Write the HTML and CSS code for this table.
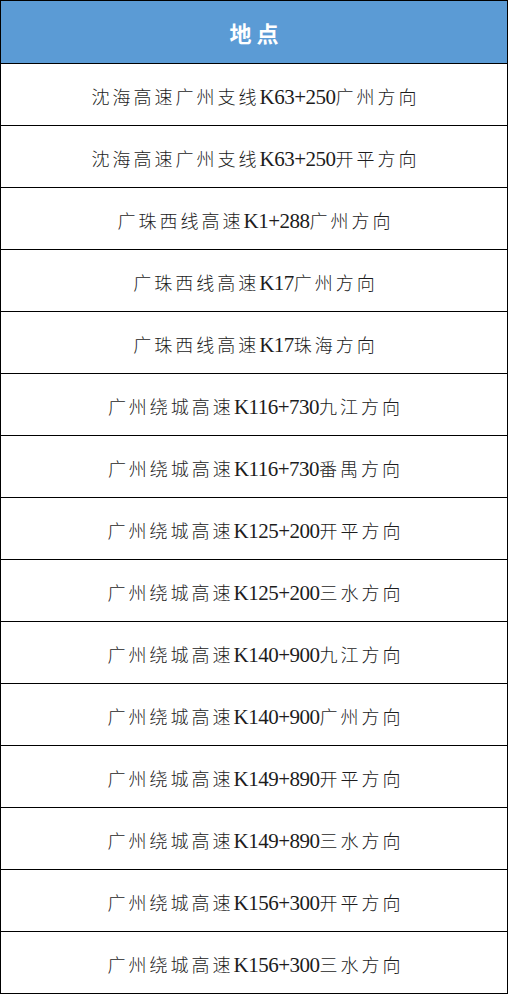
FILE: index.html
```html
<!DOCTYPE html>
<html lang="zh-CN">
<head>
<meta charset="utf-8">
<title>地点</title>
<link rel="stylesheet" href="styles.css">
</head>
<body>
<div class="table">
  <div class="head">地点</div>
  <div class="row">沈海高速广州支线<span class="km">K63+250</span>广州方向</div>
  <div class="row">沈海高速广州支线<span class="km">K63+250</span>开平方向</div>
  <div class="row">广珠西线高速<span class="km">K1+288</span>广州方向</div>
  <div class="row">广珠西线高速<span class="km">K17</span>广州方向</div>
  <div class="row">广珠西线高速<span class="km">K17</span>珠海方向</div>
  <div class="row">广州绕城高速<span class="km">K116+730</span>九江方向</div>
  <div class="row">广州绕城高速<span class="km">K116+730</span>番禺方向</div>
  <div class="row">广州绕城高速<span class="km">K125+200</span>开平方向</div>
  <div class="row">广州绕城高速<span class="km">K125+200</span>三水方向</div>
  <div class="row">广州绕城高速<span class="km">K140+900</span>九江方向</div>
  <div class="row">广州绕城高速<span class="km">K140+900</span>广州方向</div>
  <div class="row">广州绕城高速<span class="km">K149+890</span>开平方向</div>
  <div class="row">广州绕城高速<span class="km">K149+890</span>三水方向</div>
  <div class="row">广州绕城高速<span class="km">K156+300</span>开平方向</div>
  <div class="row">广州绕城高速<span class="km">K156+300</span>三水方向</div>
</div>
</body>
</html>
```
FILE: styles.css
```css
html, body {
  margin: 0;
  padding: 0;
  background: #fff;
}
body {
  font-family: "Noto Sans CJK SC", sans-serif;
  color: #1c1c1c;
}
.table {
  width: 508px;
  box-sizing: border-box;
  border: 1px solid #000;
  display: flex;
  flex-direction: column;
}
.head {
  height: 62px;
  border-bottom: 1px solid #000;
  background: #5b9bd5;
  color: #fff;
  font-size: 22px;
  font-weight: 700;
  letter-spacing: 5px;
  text-indent: 5px;
  line-height: 62px;
  text-align: center;
}
.row {
  height: 61px;
  line-height: 64px;
  border-bottom: 1px solid #000;
  font-size: 18px;
  font-weight: 300;
  letter-spacing: 3px;
  text-indent: 3px;
  text-align: center;
  white-space: nowrap;
  overflow: hidden;
}
.row:last-child {
  border-bottom: none;
}
.km {
  font-family: "Liberation Serif", serif;
  font-size: 21px;
  font-weight: 400;
  letter-spacing: -0.5px;
}
```
